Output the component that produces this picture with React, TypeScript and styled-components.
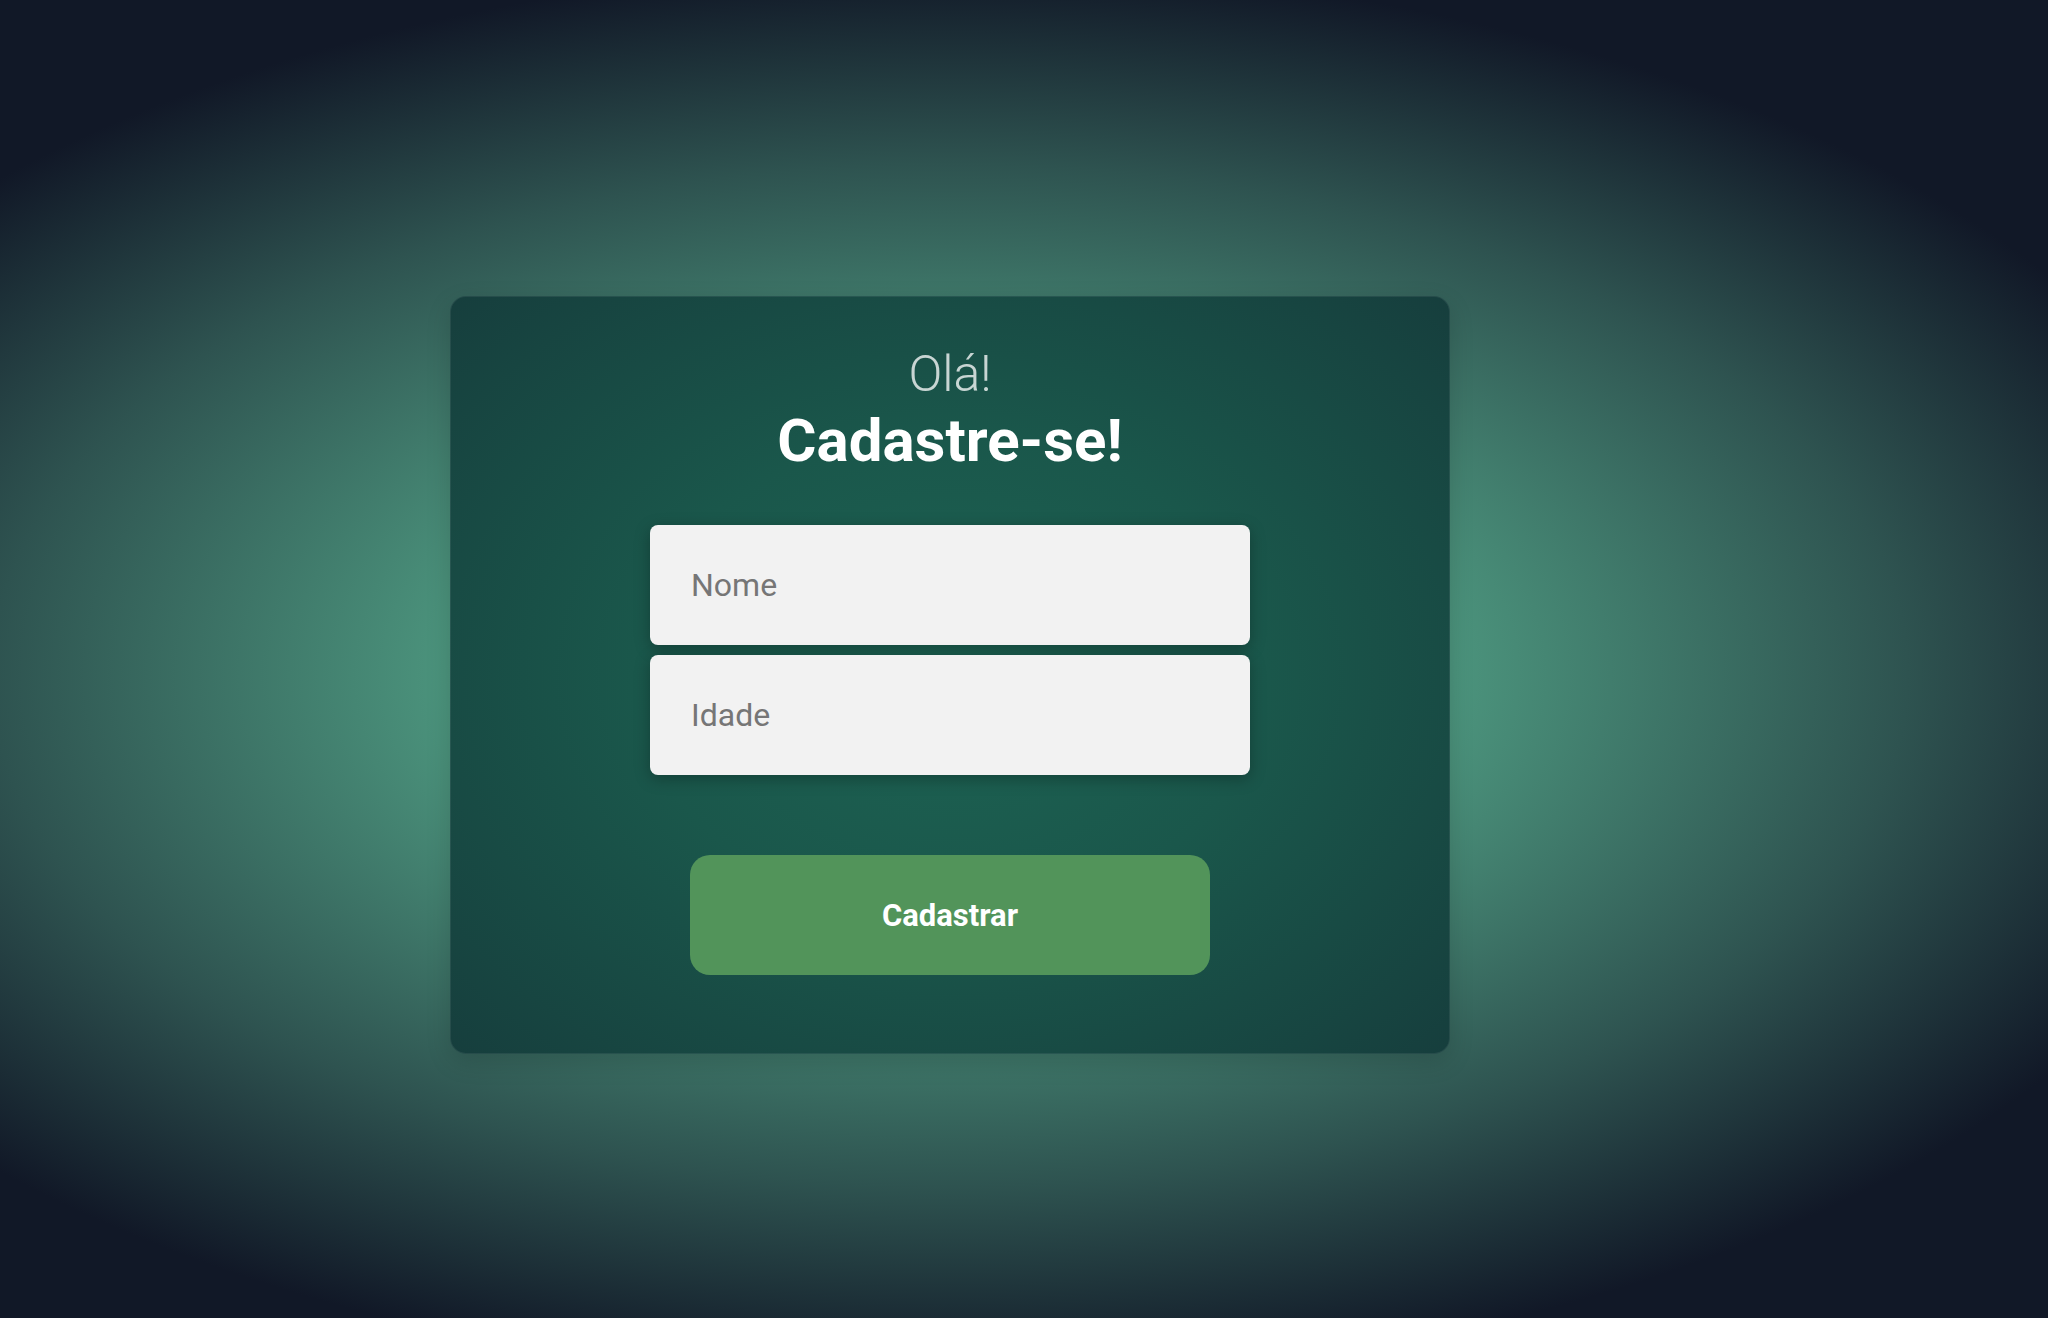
import { FC } from 'react';
import styled, { createGlobalStyle } from 'styled-components';

const GlobalStyle = createGlobalStyle`
  * {
    box-sizing: border-box;
  }
  body {
    margin: 0;
    font-family: Roboto, 'Liberation Sans', sans-serif;
    background-color: #111827;
  }
`;

const Page = styled.main`
  min-height: 100vh;
  display: flex;
  align-items: center;
  justify-content: center;
  padding: 32px 148px 0 0;
  background: radial-gradient(
    ellipse 1330px 710px at 950px 675px,
    #5fa98e 0%,
    #4b937c 38%,
    #2e5350 72%,
    #111827 100%
  );
`;

const Card = styled.section`
  width: 1000px;
  padding: 48px 0 78px;
  display: flex;
  flex-direction: column;
  align-items: center;
  border: 1px solid rgba(255, 255, 255, 0.07);
  border-radius: 16px;
  background: radial-gradient(
    ellipse at center,
    #1d6353 0%,
    #1a574b 45%,
    #163e3d 100%
  );
  box-shadow: 0 8px 24px rgba(0, 0, 0, 0.15);
`;

const Greeting = styled.h2`
  margin: 0;
  font-size: 50px;
  line-height: 58px;
  font-weight: 300;
  color: rgba(255, 255, 255, 0.76);
`;

const Title = styled.h1`
  margin: 3px 0 0;
  font-size: 60px;
  line-height: 70px;
  font-weight: 700;
  color: #ffffff;
`;

const Form = styled.form`
  margin-top: 49px;
  display: flex;
  flex-direction: column;
  align-items: center;
`;

const Fields = styled.div`
  display: flex;
  flex-direction: column;
  gap: 10px;
`;

const Input = styled.input`
  width: 600px;
  height: 120px;
  padding: 0 41px;
  border: none;
  border-radius: 8px;
  background-color: #f2f2f2;
  box-shadow: 0 4px 16px rgba(0, 0, 0, 0.28);
  font-family: Roboto, 'Liberation Sans', sans-serif;
  font-size: 32px;
  color: #333333;
  outline: none;

  &::placeholder {
    color: #767676;
  }
`;

const SubmitButton = styled.button`
  margin-top: 80px;
  width: 520px;
  height: 120px;
  border: none;
  border-radius: 20px;
  background-color: #52945a;
  color: #ffffff;
  font-family: Roboto, 'Liberation Sans', sans-serif;
  font-size: 31px;
  font-weight: 700;
  cursor: pointer;
`;

const App: FC = () => {
  return (
    <>
      <GlobalStyle />
      <Page>
        <Card>
          <Greeting>Olá!</Greeting>
          <Title>Cadastre-se!</Title>
          <Form onSubmit={(e) => e.preventDefault()}>
            <Fields>
              <Input type="text" placeholder="Nome" />
              <Input type="number" placeholder="Idade" />
            </Fields>
            <SubmitButton type="submit">Cadastrar</SubmitButton>
          </Form>
        </Card>
      </Page>
    </>
  );
};

export default App;
